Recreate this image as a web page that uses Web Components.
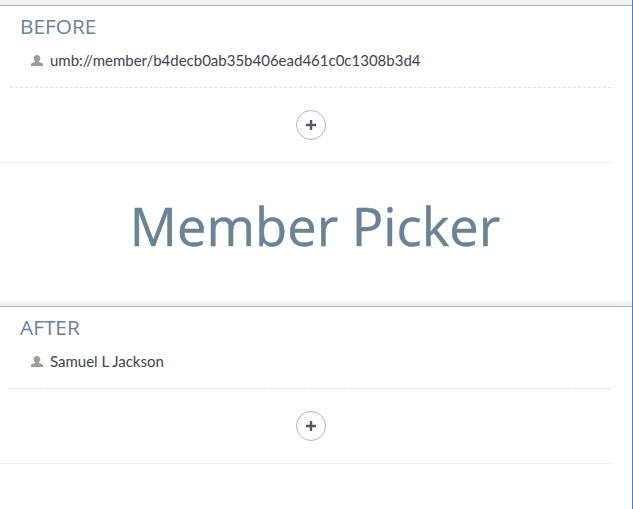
<!DOCTYPE html>
<html><head><meta charset="utf-8"><style>
html,body{margin:0;padding:0;background:#fff}
body{width:633px;height:509px;overflow:hidden}
</style></head><body>
<template id="t-page"><style>
:host{display:block;width:632px;height:509px;border-right:1px solid #3f82d0;box-sizing:content-box;background:#fff;font-family:Lato,sans-serif;overflow:hidden}
</style><slot></slot></template>
<template id="t-title"><style>
:host{display:block;height:138px;width:630px;text-align:center;font:400 52.500px/126px "Open Sans",sans-serif;color:#6c8295;-webkit-text-stroke:.4px #6c8295}
</style><slot></slot></template>
<template id="t-section"><style>
:host{display:block;background:#fff}
.strip{height:5px;background:#f2f2f4;border-bottom:1px solid #b1afbc}
.head{padding:8px 0 0 20px;font:400 20.800px/24px "Open Sans",sans-serif;color:#6c8295;height:36px;box-sizing:content-box}
.row{display:flex;align-items:center;gap:6px;padding:0 0 0 31px;height:20px;font:400 15px/20px Lato,sans-serif;color:#3e4452}
.row svg{margin-right:1px}
.dash{margin:17px 21px 0 10px;border-top:1px dashed #dfdfdf;height:0}
.add{display:flex;justify-content:center;padding:22px 0 22px;width:622px}
.line{width:612px;border-top:1px solid #efefef}
</style><div class="strip"></div><div class="head"><slot name="title"></slot></div><div class="row"><svg width="12" height="12" viewBox="0 0 12 12"><path d="M6 1C4 1 2.700 2.400 2.700 4.200c0 1.300.6 2.400 1.500 3v.7L1 9.100C.4 9.400 0 9.800 0 10.400V12h12v-1.600c0-.6-.4-1-1-1.300L7.800 7.900v-.7c.9-.6 1.500-1.700 1.500-3C9.300 2.400 8 1 6 1z" fill="#a09d98"/></svg><span><slot name="value"></slot></span></div><div class="dash"></div><div class="add"><plus-button></plus-button></div><div class="line"></div></template>
<template id="t-plus"><style>
:host{display:block;width:30px;height:30px}
svg{display:block}
</style><svg width="30" height="30" viewBox="0 0 30 30"><circle cx="15" cy="15" r="14.500" fill="#fff" stroke="#b5b5b5"/><path d="M15 10v10M10 15h10" stroke="#505866" stroke-width="2.400" fill="none"/></svg></template>
<script>
for (const [n,t] of [['member-page','t-page'],['picker-section','t-section'],['plus-button','t-plus'],['big-title','t-title']]) {
  customElements.define(n, class extends HTMLElement {
    constructor(){super();this.attachShadow({mode:'open'}).append(document.getElementById(t).content.cloneNode(true));}
  });
}
</script>
<member-page>
<picker-section><span slot="title">BEFORE</span><span slot="value">umb://member/b4decb0ab35b406ead461c0c1308b3d4</span></picker-section>
<big-title>Member Picker</big-title>
<picker-section><span slot="title">AFTER</span><span slot="value">Samuel L Jackson</span></picker-section>
</member-page>
</body></html>
